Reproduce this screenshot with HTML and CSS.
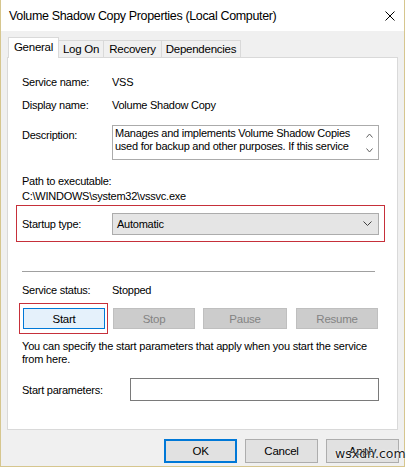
FILE: index.html
```html
<!DOCTYPE html>
<html>
<head>
<meta charset="utf-8">
<link rel="stylesheet" href="styles.css">
</head>
<body>
<div class="window">
  <div class="titlebar">
    <span class="title">Volume Shadow Copy Properties (Local Computer)</span>
    <svg class="close" width="10" height="10" viewBox="0 0 10 10"><path d="M0.5 0.5L9.5 9.5M9.5 0.5L0.5 9.5" stroke="#000" stroke-width="1" fill="none"/></svg>
  </div>
  <div class="client">
    <div class="tabs">
      <div class="tab active t-general">General</div>
      <div class="tab t-logon">Log On</div>
      <div class="tab t-recovery">Recovery</div>
      <div class="tab t-deps">Dependencies</div>
    </div>
    <div class="panel">
      <div class="row r-name"><span class="label">Service name:</span><span>VSS</span></div>
      <div class="row r-display"><span class="label">Display name:</span><span>Volume Shadow Copy</span></div>
      <div class="row r-desc">
        <span class="label desc-label">Description:</span>
        <div class="descbox">
          <div class="desctext">Manages and implements Volume Shadow Copies<br>used for backup and other purposes. If this service</div>
          <div class="scroll">
            <svg width="7" height="5" viewBox="0 0 7 5"><path d="M0.5 4.5L3.5 1L6.5 4.5" stroke="#606060" fill="none"/></svg>
            <svg width="7" height="5" viewBox="0 0 7 5"><path d="M0.5 0.5L3.5 4L6.5 0.5" stroke="#606060" fill="none"/></svg>
          </div>
        </div>
      </div>
      <div class="path">
        <div>Path to executable:</div>
        <div>C:\WINDOWS\system32\vssvc.exe</div>
      </div>
      <div class="redbox startup">
        <span class="label">Startup type:</span>
        <div class="combo">
          <span>Automatic</span>
          <svg width="9" height="5" viewBox="0 0 9 5"><path d="M0.5 0.5L4.5 4.5L8.5 0.5" stroke="#404040" fill="none"/></svg>
        </div>
      </div>
      <div class="sep"></div>
      <div class="row r-status"><span class="label">Service status:</span><span>Stopped</span></div>
      <div class="btnrow">
        <div class="redbox startwrap"><div class="btn start">Start</div></div>
        <div class="btn disabled b-stop">Stop</div>
        <div class="btn disabled b-pause">Pause</div>
        <div class="btn disabled b-resume">Resume</div>
      </div>
      <div class="note">You can specify the start parameters that apply when you start the service<br>from here.</div>
      <div class="row r-params"><span class="label plabel">Start parameters:</span><div class="input"></div></div>
    </div>
    <div class="footer">
      <div class="btn dlg ok">OK</div>
      <div class="btn dlg">Cancel</div>
      <div class="btn dlg">Apply</div>
    </div>
  </div>
  <div class="watermark">wsxdn.com</div>
</div>
</body>
</html>
```

FILE: styles.css
```css
html, body {
  margin: 0;
  padding: 0;
  background: #ffffff;
}
body {
  font-family: "Liberation Sans", Arial, sans-serif;
  font-size: 11px;
  letter-spacing: -0.25px;
  color: #000;
}
.window {
  position: relative;
  box-sizing: border-box;
  width: 405px;
  height: 467px;
  border: 1px solid #d6c68e;
  border-top: none;
  background: #f0f0f0;
  display: flex;
  flex-direction: column;
}
.titlebar {
  height: 31px;
  background: #ffffff;
  display: flex;
  align-items: center;
  padding-left: 8px;
  padding-right: 9px;
  justify-content: space-between;
}
.title {
  font-size: 12.5px;
  letter-spacing: -0.35px;
}
.close {
  display: block;
  margin-top: 1px;
}
.client {
  flex: 1;
  display: flex;
  flex-direction: column;
}
.tabs {
  display: flex;
  align-items: flex-end;
  height: 19px;
  margin-top: 7px;
  padding-left: 7px;
}
.tab {
  box-sizing: border-box;
  height: 17px;
  border: 1px solid #d9d9d9;
  border-bottom: none;
  border-left: none;
  background: #f0f0f0;
  display: flex;
  align-items: center;
  justify-content: center;
  font-size: 11.5px;
}
.tab.active {
  height: 21px;
  background: #ffffff;
  border-left: 1px solid #d9d9d9;
  margin-bottom: -1px;
  position: relative;
  z-index: 1;
  padding-bottom: 2px;
}
.t-general { width: 51px; }
.t-logon { width: 45px; }
.t-recovery { width: 58px; }
.t-deps { width: 79px; }
.panel {
  box-sizing: border-box;
  margin-left: 6px;
  width: 391px;
  height: 373px;
  background: #ffffff;
  border: 1px solid #d9d9d9;
  padding-left: 14px;
  display: flex;
  flex-direction: column;
}
.row {
  display: flex;
  align-items: center;
  height: 16px;
}
.label {
  width: 90px;
  flex: none;
}
.r-name { margin-top: 16px; }
.r-display { margin-top: 7px; }
.r-desc {
  margin-top: 12px;
  height: 35px;
  align-items: flex-start;
}
.desc-label {
  padding-top: 3px;
  line-height: 15px;
}
.descbox {
  box-sizing: border-box;
  width: 267px;
  height: 35px;
  border: 1px solid #ababab;
  display: flex;
  justify-content: space-between;
  padding-left: 2px;
}
.desctext {
  line-height: 13px;
  padding-top: 1px;
  white-space: nowrap;
}
.scroll {
  width: 17px;
  display: flex;
  flex-direction: column;
  align-items: center;
  padding-top: 7px;
  gap: 10px;
}
.scroll svg { display: block; }
.path {
  margin-top: 14px;
  line-height: 15px;
}
.redbox {
  border: 1px solid #c6303a;
  box-sizing: border-box;
}
.startup {
  margin-top: 1px;
  margin-left: -6px;
  width: 369px;
  height: 37px;
  display: flex;
  align-items: center;
  padding-left: 5px;
}
.combo {
  box-sizing: border-box;
  width: 267px;
  height: 22px;
  background: #e5e5e5;
  border: 1px solid #acacac;
  display: flex;
  align-items: center;
  justify-content: space-between;
  padding-left: 4px;
  padding-right: 6px;
}
.combo svg { display: block; }
.sep {
  margin-top: 29px;
  width: 353px;
  height: 1px;
  background: #a0a0a0;
}
.r-status { margin-top: 10px; }
.btnrow {
  margin-top: 5px;
  display: flex;
  align-items: center;
  margin-left: -3px;
}
.startwrap {
  width: 89px;
  height: 31px;
  display: flex;
  align-items: center;
  padding-left: 3px;
}
.btn {
  box-sizing: border-box;
  height: 21px;
  width: 82px;
  display: flex;
  align-items: center;
  justify-content: center;
  border: 1px solid #adadad;
  background: #e1e1e1;
  font-size: 11.5px;
}
.start {
  background: #e5f1fb;
  border-color: #0078d7;
}
.disabled {
  background: #cccccc;
  border-color: #bfbfbf;
  color: #838383;
}
.b-stop { margin-left: 5px; }
.b-pause { margin-left: 8px; width: 84px; }
.b-resume { margin-left: 9px; width: 82px; }
.note {
  margin-top: 6px;
  line-height: 13px;
  white-space: nowrap;
  letter-spacing: -0.2px;
}
.r-params {
  margin-top: 12px;
  height: 23px;
}
.plabel { width: 108px; }
.input {
  box-sizing: border-box;
  width: 249px;
  height: 23px;
  border: 1px solid #7a7a7a;
  background: #fff;
}
.footer {
  display: flex;
  justify-content: flex-end;
  gap: 8px;
  margin-top: 9px;
  padding-right: 5px;
}
.dlg {
  width: 73px;
  height: 24px;
}
.ok {
  border: 2px solid #0078d7;
}
.watermark {
  position: absolute;
  left: 334px;
  top: 446px;
  font-family: "DejaVu Sans", sans-serif;
  font-size: 12.5px;
  letter-spacing: 0;
  color: #1a1a1a;
  text-shadow: 0 0 2px #fff, 0 0 2px #fff;
}
```
